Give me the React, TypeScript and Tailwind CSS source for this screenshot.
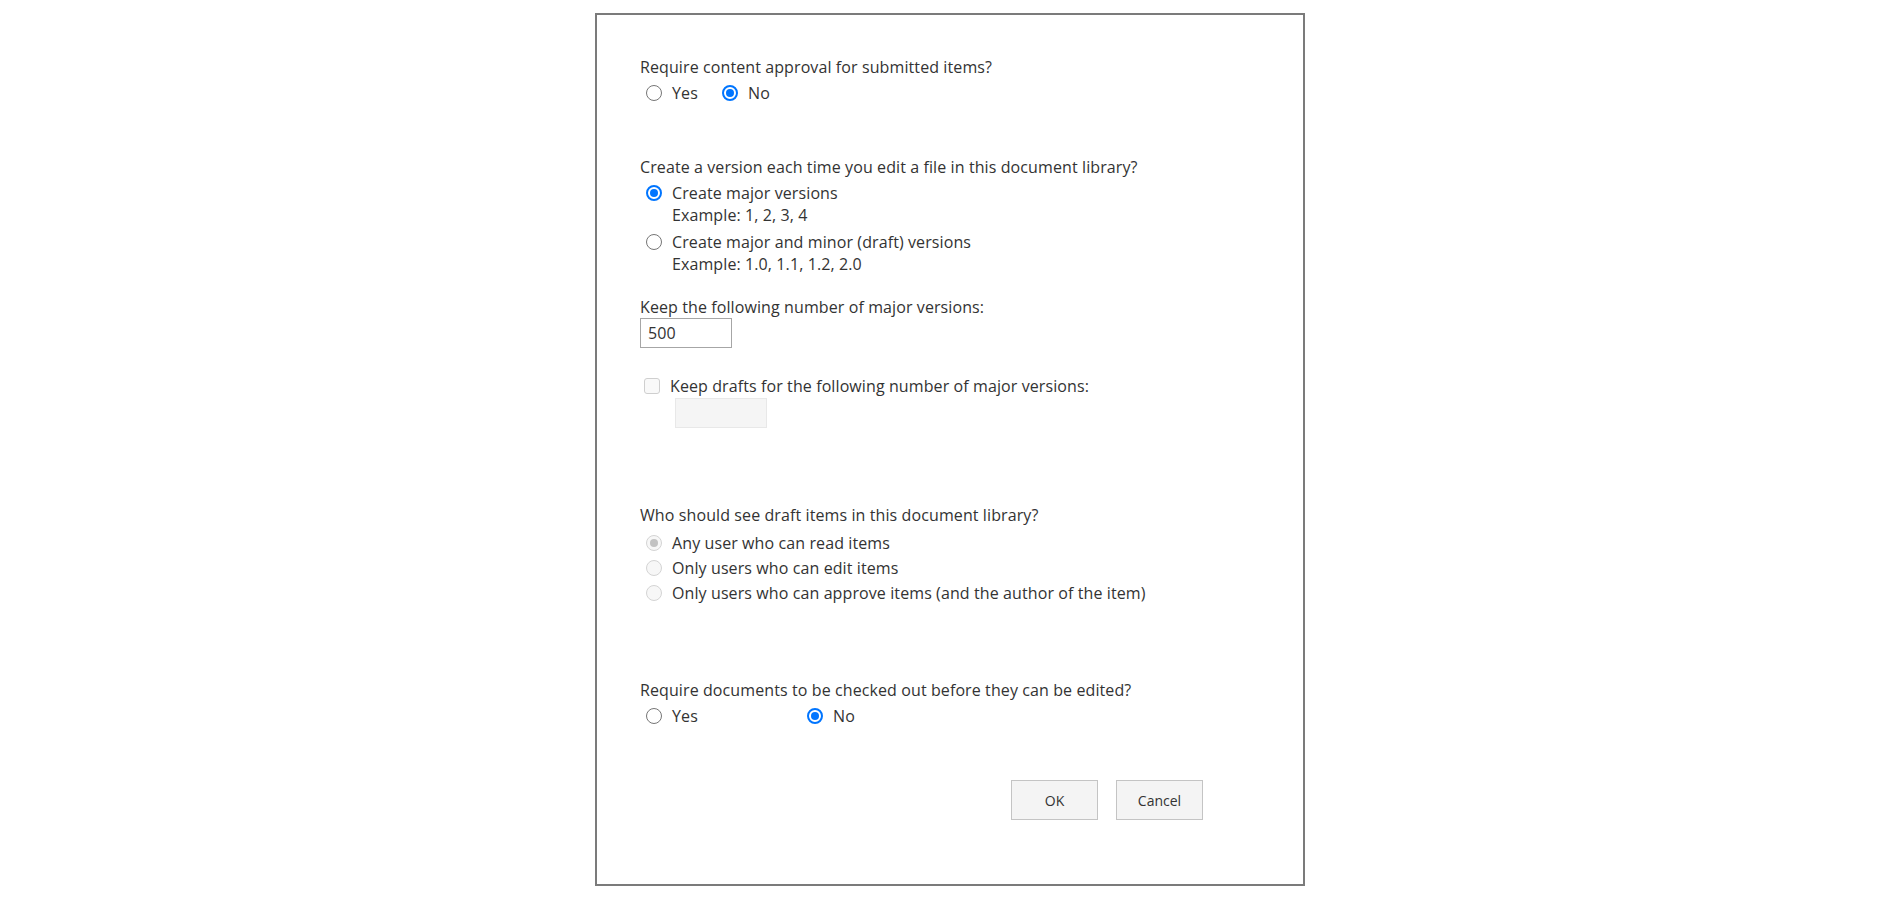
import React from 'react';

const Radio = ({ checked = false, disabled = false }: { checked?: boolean; disabled?: boolean }) => {
    if (disabled) {
        return (
            <span className="w-4 h-4 shrink-0 rounded-full border border-[#d4d4d4] bg-[#f7f7f7] flex items-center justify-center">
                {checked && <span className="w-2 h-2 rounded-full bg-[#c2c2c2]" />}
            </span>
        );
    }
    if (checked) {
        return (
            <span className="w-4 h-4 shrink-0 rounded-full border-2 border-[#0075ff] bg-white flex items-center justify-center">
                <span className="w-2 h-2 rounded-full bg-[#0075ff]" />
            </span>
        );
    }
    return <span className="w-4 h-4 shrink-0 rounded-full border border-[#767676] bg-white" />;
};

const Option = ({ label, checked, disabled, className = '' }: { label: string; checked?: boolean; disabled?: boolean; className?: string }) => (
    <div className={`flex items-center gap-[10px] h-6 ${className}`}>
        <Radio checked={checked} disabled={disabled} />
        <span>{label}</span>
    </div>
);

export default function App() {
    return (
        <div className="min-h-screen bg-white flex justify-center pt-[13px] text-[16px] tracking-[0.1px] text-[#333333]" style={{ fontFamily: '"Open Sans", "Noto Sans", sans-serif' }}>
            <div className="w-[710px] h-[873px] border-2 border-[#7b7b7b] pl-[43px] pt-[40px] flex flex-col">
                {/* Content approval */}
                <div className="h-6 flex items-center">Require content approval for submitted items?</div>
                <div className="flex mt-[2px] ml-[6px]">
                    <Option label="Yes" className="w-[76px]" />
                    <Option label="No" checked />
                </div>

                {/* Versioning */}
                <div className="h-6 flex items-center mt-[50px]">Create a version each time you edit a file in this document library?</div>
                <div className="ml-[6px] mt-[2px]">
                    <Option label="Create major versions" checked />
                    <div className="h-5 flex items-center pl-[26px]">Example: 1, 2, 3, 4</div>
                    <Option label="Create major and minor (draft) versions" className="mt-[5px]" />
                    <div className="h-5 flex items-center pl-[26px]">Example: 1.0, 1.1, 1.2, 2.0</div>
                </div>

                <div className="h-[22px] flex items-center mt-[22px]">Keep the following number of major versions:</div>
                <input
                    defaultValue="500"
                    className="w-[92px] h-[30px] border border-[#a6a6a6] px-[7px] text-[16px] text-[#333333] outline-none"
                />

                <div className="flex items-center gap-[10px] h-6 mt-[26px] ml-[4px]">
                    <span className="w-4 h-4 shrink-0 rounded-[3px] border border-[#cfcfcf] bg-[#f9f9f9]" />
                    <span>Keep drafts for the following number of major versions:</span>
                </div>
                <div className="w-[92px] h-[30px] border border-[#e8e8e8] bg-[#f5f5f5] ml-[35px]" />

                {/* Draft item security */}
                <div className="h-6 flex items-center mt-[75px]">Who should see draft items in this document library?</div>
                <div className="ml-[6px] mt-[4px] flex flex-col gap-[1px]">
                    <Option label="Any user who can read items" checked disabled />
                    <Option label="Only users who can edit items" disabled />
                    <Option label="Only users who can approve items (and the author of the item)" disabled />
                </div>

                {/* Check out */}
                <div className="h-6 flex items-center mt-[73px]">Require documents to be checked out before they can be edited?</div>
                <div className="flex mt-[2px] ml-[6px]">
                    <Option label="Yes" className="w-[161px]" />
                    <Option label="No" checked />
                </div>

                <div className="flex justify-end gap-[18px] mr-[100px] mt-[52px] text-[14px] tracking-normal">
                    <button className="w-[87px] h-[40px] border border-[#c4c4c4] bg-[#f4f4f4] text-[#333333]">OK</button>
                    <button className="w-[87px] h-[40px] border border-[#c4c4c4] bg-[#f4f4f4] text-[#333333]">Cancel</button>
                </div>
            </div>
        </div>
    );
}
